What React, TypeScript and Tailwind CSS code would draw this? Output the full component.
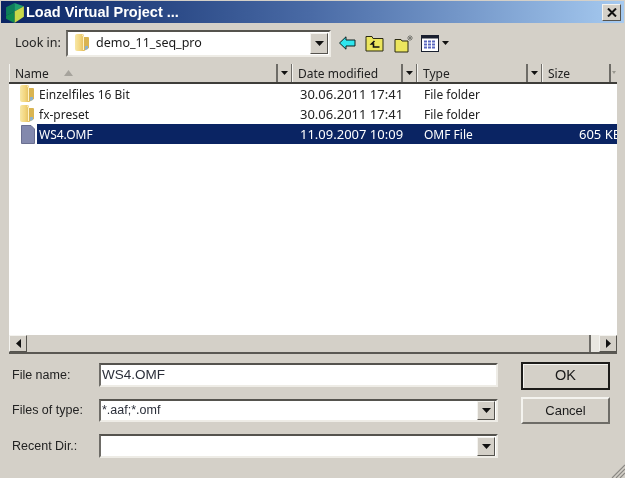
import React from "react";

const Folder = ({ className = "" }: { className?: string }) => (
  <svg width="18" height="20" viewBox="0 0 18 20" className={className}>
    <defs>
      <linearGradient id="fg" x1="0" y1="0" x2="1" y2="0">
        <stop offset="0" stopColor="#f7e7a6" />
        <stop offset="0.55" stopColor="#f3d67e" />
        <stop offset="1" stopColor="#e2bd5c" />
      </linearGradient>
    </defs>
    <path d="M2 3 Q2 1 4 1 L9 1 Q11 1 11 3 L11 18 L4 18 Q2 18 2 16 Z" fill="url(#fg)" />
    <path d="M11 4 L15 4 Q16 4 16 5 L16 15 L11 18 Z" fill="#d9b451" />
    <path d="M12 13 L15 13 L15 16 L12 17 Z" fill="#8fb2c8" />
    <path d="M9 2 Q10.5 2 10.5 4 L10.5 17" stroke="#fff3c8" strokeWidth="1" fill="none" />
  </svg>
);

const DownArrow = () => (
  <svg width="9" height="5" viewBox="0 0 9 5"><path d="M0 0H9L4.5 5Z" fill="#111" /></svg>
);

const Raised = ({ className = "", children }: { className?: string; children?: React.ReactNode }) => (
  <div className={`flex items-center justify-center bg-[#d4d0c8] border border-t-[#f4f3ef] border-l-[#f4f3ef] border-r-[#55534e] border-b-[#55534e] ${className}`}>
    {children}
  </div>
);

const Header = ({ label, width, arrow = true, sort = false }: { label: string; width: string; arrow?: boolean; sort?: boolean }) => (
  <>
    <div className={`${width} h-full flex items-center pl-[5px] border-r-2 border-r-[#6e6c67] border-l border-l-[#f4f3ef]`}>
      <span className="pt-[2px]">{label}</span>
      {sort && (
        <svg width="9" height="6" viewBox="0 0 9 6" className="ml-[15px] mb-[1px]"><path d="M0 6L4.5 0L9 6Z" fill="#a6a39c" /></svg>
      )}
    </div>
    {arrow && (
      <div className="w-[14px] h-full flex items-center justify-center border-r border-r-[#6e6c67]">
        <svg width="7" height="4" viewBox="0 0 7 4"><path d="M0 0H7L3.5 4Z" fill="#111" /></svg>
      </div>
    )}
  </>
);

const Row = ({ icon, name, date, type, size, selected }: { icon: React.ReactNode; name: string; date: string; type: string; size?: string; selected?: boolean }) => (
  <div className="flex items-center h-[20px]">
    <div className="w-[28px] pl-[9px] h-[20px] flex items-center shrink-0">{icon}</div>
    <div className={`flex flex-1 items-center h-[20px] pt-[2px] overflow-hidden ${selected ? "bg-[#0a2463] text-white" : ""}`}>
      <div className="w-[263px] pl-[2px] shrink-0">{name}</div>
      <div className="w-[124px] shrink-0 whitespace-nowrap text-[13px]">{date}</div>
      <div className="w-[155px] shrink-0 whitespace-nowrap">{type}</div>
      <div className="whitespace-nowrap shrink-0 text-[13px]">{size}</div>
    </div>
  </div>
);

const Field = ({ label, value, combo, h, valueClass = "" }: { label: string; value?: string; combo?: boolean; h: string; valueClass?: string }) => (
  <div className="flex items-center">
    <div className="w-[87px] text-[#222] text-[12.5px]">{label}</div>
    <div className={`w-[399px] ${h} bg-white border-2 border-t-[#55534e] border-l-[#6e6c67] border-r-[#eeece6] border-b-[#eeece6] flex items-center justify-between pl-[1px]`}>
      <span className={`text-[#2b2f3a] ${valueClass}`}>{value}</span>
      {combo && (
        <Raised className="w-[18px] h-[19px] mr-[1px]">
          <DownArrow />
        </Raised>
      )}
    </div>
  </div>
);

export default function App() {
  return (
    <div className="w-[625px] h-[478px] bg-[#d4d0c8] flex flex-col overflow-hidden relative blur-[0.45px] text-[#1a1a1a] text-[13px] font-['Liberation_Sans',sans-serif]">
      {/* Title bar */}
      <div className="mx-[1px] mt-[1px] h-[22px] flex items-center justify-between bg-gradient-to-r from-[#0a2463] via-[#4a6ba6] to-[#a6caf0] shrink-0">
        <div className="flex items-center">
          <svg width="21" height="21" viewBox="0 0 20 20" className="ml-[4px]">
            <path d="M1 5L9 1L9 9L1 13Z" fill="#0e7f5a" />
            <path d="M9 1L18 4L9 9Z" fill="#1fa06d" />
            <path d="M9 9L18 4L18 14L9 20Z" fill="#c8d84a" />
            <path d="M1 13L9 9L9 20L1 16Z" fill="#0f8a4f" />
          </svg>
          <span className="text-white font-bold text-[14.5px] leading-none">Load Virtual Project ...</span>
        </div>
        <Raised className="w-[19px] h-[17px] mr-[3px]">
          <svg width="10" height="9" viewBox="0 0 10 9"><path d="M1 0.5L9 8.5M9 0.5L1 8.5" stroke="#111" strokeWidth="2" /></svg>
        </Raised>
      </div>

      {/* Look in */}
      <div className="flex items-center h-[40px] pl-[15px] shrink-0">
        <span className="w-[51px] text-[12.5px] font-['Noto_Sans',sans-serif] text-[#222]">Look in:</span>
        <div className="w-[265px] h-[27px] bg-white border-2 border-t-[#55534e] border-l-[#6e6c67] border-r-[#eeece6] border-b-[#eeece6] flex items-center justify-between">
          <div className="flex items-center pl-[5px] gap-[5px]">
            <Folder />
            <span className="text-[12.5px] font-['Noto_Sans',sans-serif]">demo_11_seq_pro</span>
          </div>
          <Raised className="w-[18px] h-[21px] mr-[1px]"><DownArrow /></Raised>
        </div>
        <div className="flex items-center ml-[8px] gap-[9px]">
          <svg width="17" height="14" viewBox="0 0 17 14"><path d="M0.5 7L7 0.8V4H16V10H7V13.2Z" fill="#2ee6ee" stroke="#10201f" strokeWidth="1" /></svg>
          <svg width="19" height="17" viewBox="0 0 19 17">
            <path d="M1 3.5V1.5H7L8 3.5H18V16H1Z" fill="#ece65e" stroke="#2a2a12" strokeWidth="1" />
            <path d="M9.5 6L6.5 9H8.5V12H14.5" fill="none" stroke="#111" strokeWidth="1.6" />
          </svg>
          <svg width="21" height="19" viewBox="0 0 21 19" className="ml-[1px]">
            <path d="M1 7V5.5H7L8 7H14V18H1Z" fill="#ece65e" stroke="#2a2a12" strokeWidth="1" />
            <path d="M16 1V7M13 4H19M14 2L18 6M18 2L14 6" stroke="#7a7a74" strokeWidth="1" />
          </svg>
          <div className="flex items-center gap-[2px] -ml-[3px]">
            <svg width="18" height="17" viewBox="0 0 18 17">
              <rect x="0.5" y="0.5" width="17" height="16" fill="#fff" stroke="#1a2030" />
              <rect x="0.5" y="0.5" width="17" height="3" fill="#1a2030" />
              <path d="M3 6.5H15M3 9.5H15M3 12.5H15" stroke="#5a68c0" strokeWidth="2" strokeDasharray="3 1" />
            </svg>
            <svg width="7" height="4" viewBox="0 0 7 4" className="ml-[1px]"><path d="M0 0H7L3.5 4Z" fill="#111" /></svg>
          </div>
        </div>
      </div>

      {/* File list */}
      <div className="mx-[9px] mr-[8px] h-[291px] flex flex-col border-t border-t-[#d4d0c8] shrink-0 font-['Noto_Sans',sans-serif] text-[12px]">
        <div className="h-[20px] flex items-center bg-[#d4d0c8] border-b-2 border-b-[#3e3d39] shrink-0 text-[#222]">
          <Header label="Name" width="w-[269px]" sort />
          <Header label="Date modified" width="w-[111px]" />
          <Header label="Type" width="w-[111px]" />
          <Header label="Size" width="w-[69px]" arrow={false} />
          <svg width="4" height="4" viewBox="0 0 4 4" className="ml-[1px]"><path d="M0 0H4L2 3Z" fill="#9a9890" /></svg>
        </div>
        <div className="flex-1 bg-white text-[#222] overflow-hidden">
          <Row icon={<Folder />} name="Einzelfiles 16 Bit" date="30.06.2011 17:41" type="File folder" />
          <Row icon={<Folder />} name="fx-preset" date="30.06.2011 17:41" type="File folder" />
          <Row
            icon={
              <svg width="14" height="19" viewBox="0 0 14 19" className="ml-[3px]"><path d="M0.5 0.5H10L13.5 4V18.5H0.5Z" fill="#8389ad" stroke="#6a6f90" /></svg>
            }
            name="WS4.OMF"
            date="11.09.2007 10:09"
            type="OMF File"
            size="605 KB"
            selected
          />
        </div>
        <div className="h-[19px] flex items-stretch bg-[#d4d0c8] border-b-2 border-b-[#5a5853] shrink-0">
          <Raised className="w-[18px]">
            <svg width="5" height="9" viewBox="0 0 5 9"><path d="M5 0V9L0 4.5Z" fill="#111" /></svg>
          </Raised>
          <div className="flex-1 border-r-2 border-r-[#6e6c67]" />
          <div className="w-[8px] bg-[#e9e7e1]" />
          <Raised className="w-[18px]">
            <svg width="5" height="9" viewBox="0 0 5 9"><path d="M0 0V9L5 4.5Z" fill="#111" /></svg>
          </Raised>
        </div>
      </div>

      {/* Bottom form */}
      <div className="flex pl-[12px] pt-[9px] flex-1">
        <div className="flex flex-col gap-[12px] w-[486px]">
          <Field label="File name:" value="WS4.OMF" h="h-[24px]" valueClass="text-[13.5px]" />
          <Field label="Files of type:" value="*.aaf;*.omf" combo h="h-[23px]" valueClass="text-[12.5px]" />
          <Field label="Recent Dir.:" combo h="h-[24px]" />
        </div>
        <div className="flex flex-col ml-[23px] gap-[7px] -mt-[1px]">
          <button className="w-[89px] h-[28px] bg-[#d4d0c8] border-2 border-[#1c1b19] text-[14.5px] shadow-[inset_1px_1px_0_#f4f3ef]">OK</button>
          <button className="w-[89px] h-[27px] bg-[#d4d0c8] border-2 border-t-[#f4f3ef] border-l-[#f4f3ef] border-r-[#6e6c67] border-b-[#6e6c67] text-[13px]">Cancel</button>
        </div>
      </div>

      {/* Resize grip */}
      <svg width="14" height="14" viewBox="0 0 14 14" className="absolute right-0 bottom-0">
        <path d="M14 1L1 14M14 5L5 14M14 9L9 14" stroke="#8a8883" strokeWidth="1.2" />
      </svg>
    </div>
  );
}
